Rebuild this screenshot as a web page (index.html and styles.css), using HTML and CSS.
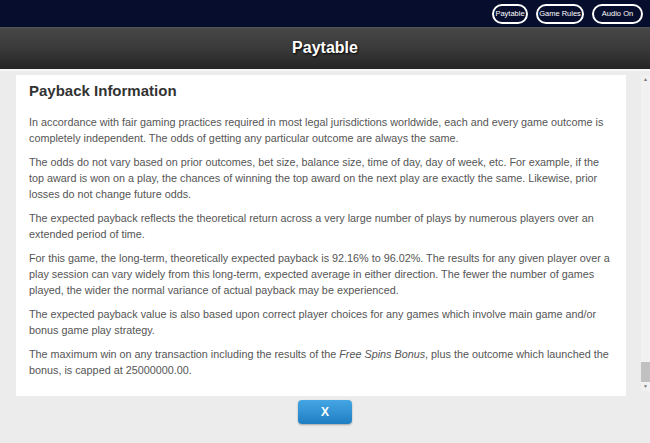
FILE: index.html
```html
<!DOCTYPE html>
<html>
<head>
  <title>Paytable</title>
  <link rel="stylesheet" href="styles.css">
</head>
<body>
  <div class="topbar">
    <button class="pill pill-paytable">Paytable</button>
    <button class="pill pill-rules">Game Rules</button>
    <button class="pill pill-audio">Audio On</button>
  </div>
  <div class="titlebar">
    <h1>Paytable</h1>
  </div>
  <div class="main">
    <div class="panel">
      <h2>Payback Information</h2>
      <p>In accordance with fair gaming practices required in most legal jurisdictions worldwide, each and every game outcome is completely independent. The odds of getting any particular outcome are always the same.</p>
      <p>The odds do not vary based on prior outcomes, bet size, balance size, time of day, day of week, etc. For example, if the top award is won on a play, the chances of winning the top award on the next play are exactly the same. Likewise, prior losses do not change future odds.</p>
      <p>The expected payback reflects the theoretical return across a very large number of plays by numerous players over an extended period of time.</p>
      <p>For this game, the long-term, theoretically expected payback is 92.16% to 96.02%. The results for any given player over a play session can vary widely from this long-term, expected average in either direction. The fewer the number of games played, the wider the normal variance of actual payback may be experienced.</p>
      <p>The expected payback value is also based upon correct player choices for any games which involve main game and/or bonus game play strategy.</p>
      <p>The maximum win on any transaction including the results of the <span class="bonus-name">Free Spins Bonus</span>, plus the outcome which launched the bonus, is capped at 25000000.00.</p>
    </div>
    <div class="scrollbar">
      <div class="scroll-arrow">&#9650;</div>
      <div class="scroll-track">
        <div class="scroll-thumb"></div>
      </div>
      <div class="scroll-arrow">&#9660;</div>
    </div>
  </div>
  <div class="footer">
    <button class="close-btn">X</button>
  </div>
</body>
</html>
```

FILE: styles.css
```css
html, body {
  margin: 0;
  padding: 0;
}

body {
  width: 650px;
  height: 443px;
  overflow: hidden;
  background-color: #ececec;
  font-family: "Liberation Sans", Arial, sans-serif;
}

.topbar {
  height: 27px;
  background-color: #070d2c;
  display: flex;
  justify-content: flex-end;
  align-items: center;
  gap: 8px;
  padding-right: 7px;
  box-sizing: border-box;
}

.pill {
  height: 20px;
  border: 2px solid #fff;
  border-radius: 11px;
  background: none;
  color: #fff;
  font-family: "Liberation Sans", Arial, sans-serif;
  font-size: 7.5px;
  white-space: nowrap;
  padding: 0;
  box-sizing: border-box;
}

.pill-paytable {
  width: 36px;
}

.pill-rules {
  width: 48px;
}

.pill-audio {
  width: 51px;
}

.titlebar {
  height: 42px;
  background: linear-gradient(to bottom, #555 0, #464646 2px, #3a3a3a 50%, #252525 100%);
  border-bottom: 2px solid #f6f6f6;
  display: flex;
  align-items: center;
  justify-content: center;
}

.titlebar h1 {
  margin: 0;
  color: #fff;
  font-size: 16px;
  font-weight: bold;
  text-shadow: 1px 1px 2px #000;
}

.main {
  display: flex;
  height: 321px;
  padding-top: 4px;
}

.panel {
  width: 610px;
  margin-left: 16px;
  background-color: #fff;
  padding: 7px 13px 0 13px;
  box-sizing: border-box;
  overflow: hidden;
}

.panel h2 {
  margin: 0 0 14px 0;
  font-size: 15px;
  line-height: 18px;
  color: #333;
}

.panel p {
  margin: 0 0 8px 0;
  font-size: 10.8px;
  line-height: 16px;
  color: #555;
}

.bonus-name {
  font-style: italic;
}

.scrollbar {
  width: 9px;
  margin-left: auto;
  display: flex;
  flex-direction: column;
  background-color: #f1f1f1;
  height: 316px;
}

.scroll-arrow {
  height: 9px;
  font-size: 5px;
  line-height: 9px;
  text-align: center;
  color: #777;
}

.scroll-track {
  flex: 1;
  display: flex;
  flex-direction: column;
  justify-content: flex-end;
}

.scroll-thumb {
  height: 20px;
  background-color: #c1c1c1;
}

.footer {
  display: flex;
  justify-content: center;
  padding-top: 4px;
}

.close-btn {
  width: 54px;
  height: 24px;
  border: none;
  border-radius: 4px;
  background: linear-gradient(to bottom, #45a6e4, #1f7ec2);
  box-shadow: 0 1px 2px rgba(0, 0, 0, 0.3);
  color: #fff;
  font-family: "Liberation Sans", Arial, sans-serif;
  font-size: 12px;
  font-weight: bold;
  padding: 0;
}
```
